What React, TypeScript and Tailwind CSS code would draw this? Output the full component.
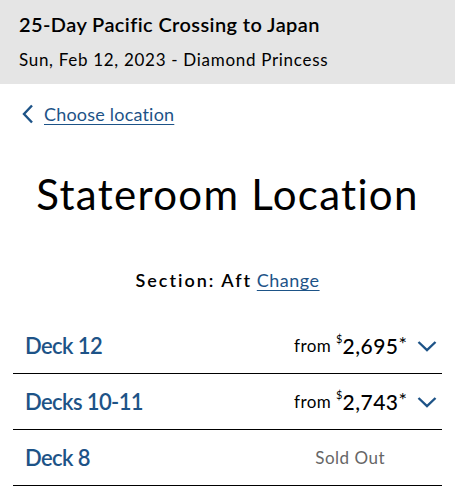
const decks = [
  { name: 'Deck 12', price: '2,695' },
  { name: 'Decks 10-11', price: '2,743' },
  { name: 'Deck 8', price: null },
];

function BackChevron() {
  return (
    <svg width="12" height="20" viewBox="0 0 12 20" fill="none" stroke="currentColor" strokeWidth="2.4">
      <polyline points="10,1.5 2,10 10,18.5" />
    </svg>
  );
}

function DownChevron() {
  return (
    <svg width="20" height="12" viewBox="0 0 20 12" fill="none" stroke="currentColor" strokeWidth="2.4">
      <polyline points="1.5,2 10,10 18.5,2" />
    </svg>
  );
}

export default function App() {
  return (
    <div className="w-[455px] h-[494px] bg-white font-['Lato',sans-serif] text-black overflow-hidden">
      {/* Voyage header */}
      <div className="bg-[#e5e5e5] h-[84px] px-[19px] pt-[10px]">
        <h1 className="text-[20px] font-semibold leading-[28px] tracking-[0.4px]">
          25-Day Pacific Crossing to Japan
        </h1>
        <p className="text-[17px] leading-[24px] mt-[10px] tracking-[0.7px]">
          Sun, Feb 12, 2023 - Diamond Princess
        </p>
      </div>

      {/* Back link */}
      <a href="#" className="flex items-center gap-[10px] pl-[22px] mt-[18px] text-[#1d5387]">
        <BackChevron />
        <span className="text-[18px] leading-[24px] underline underline-offset-[3px] tracking-[0.2px]">
          Choose location
        </span>
      </a>

      <h2 className="text-center text-[42px] leading-[50px] mt-[43px] tracking-[1.3px]">
        Stateroom Location
      </h2>

      <div className="text-center text-[18px] leading-[24px] mt-[49px]">
        <span className="font-semibold tracking-[2px]">Section: Aft</span>{' '}
        <a href="#" className="text-[#1d5387] underline underline-offset-[3px] tracking-[0.5px]">
          Change
        </a>
      </div>

      {/* Deck list */}
      <div className="mx-[13px] mt-[26px]">
        {decks.map((deck) => (
          <div
            key={deck.name}
            className="flex items-center justify-between h-[56px] border-b-[1.5px] border-black pl-[12px] pr-[5px]"
          >
            <span className="text-[22px] font-semibold text-[#1d5387] tracking-[-0.6px]">{deck.name}</span>
            {deck.price ? (
              <div className="flex items-center">
                <span className="text-[17px] tracking-[0.4px]">from</span>
                <span className="ml-[5px] text-[11px] self-start mt-[1px]">$</span>
                <span className="text-[21px] font-medium tracking-[0.5px]">{deck.price}</span>
                <span className="text-[20px] leading-none self-start mt-[3px]">*</span>
                <span className="ml-[10px] text-[#1d5387]">
                  <DownChevron />
                </span>
              </div>
            ) : (
              <span className="text-[17px] text-[#666] mr-[52px] tracking-[0.5px]">Sold Out</span>
            )}
          </div>
        ))}
      </div>
    </div>
  );
}
